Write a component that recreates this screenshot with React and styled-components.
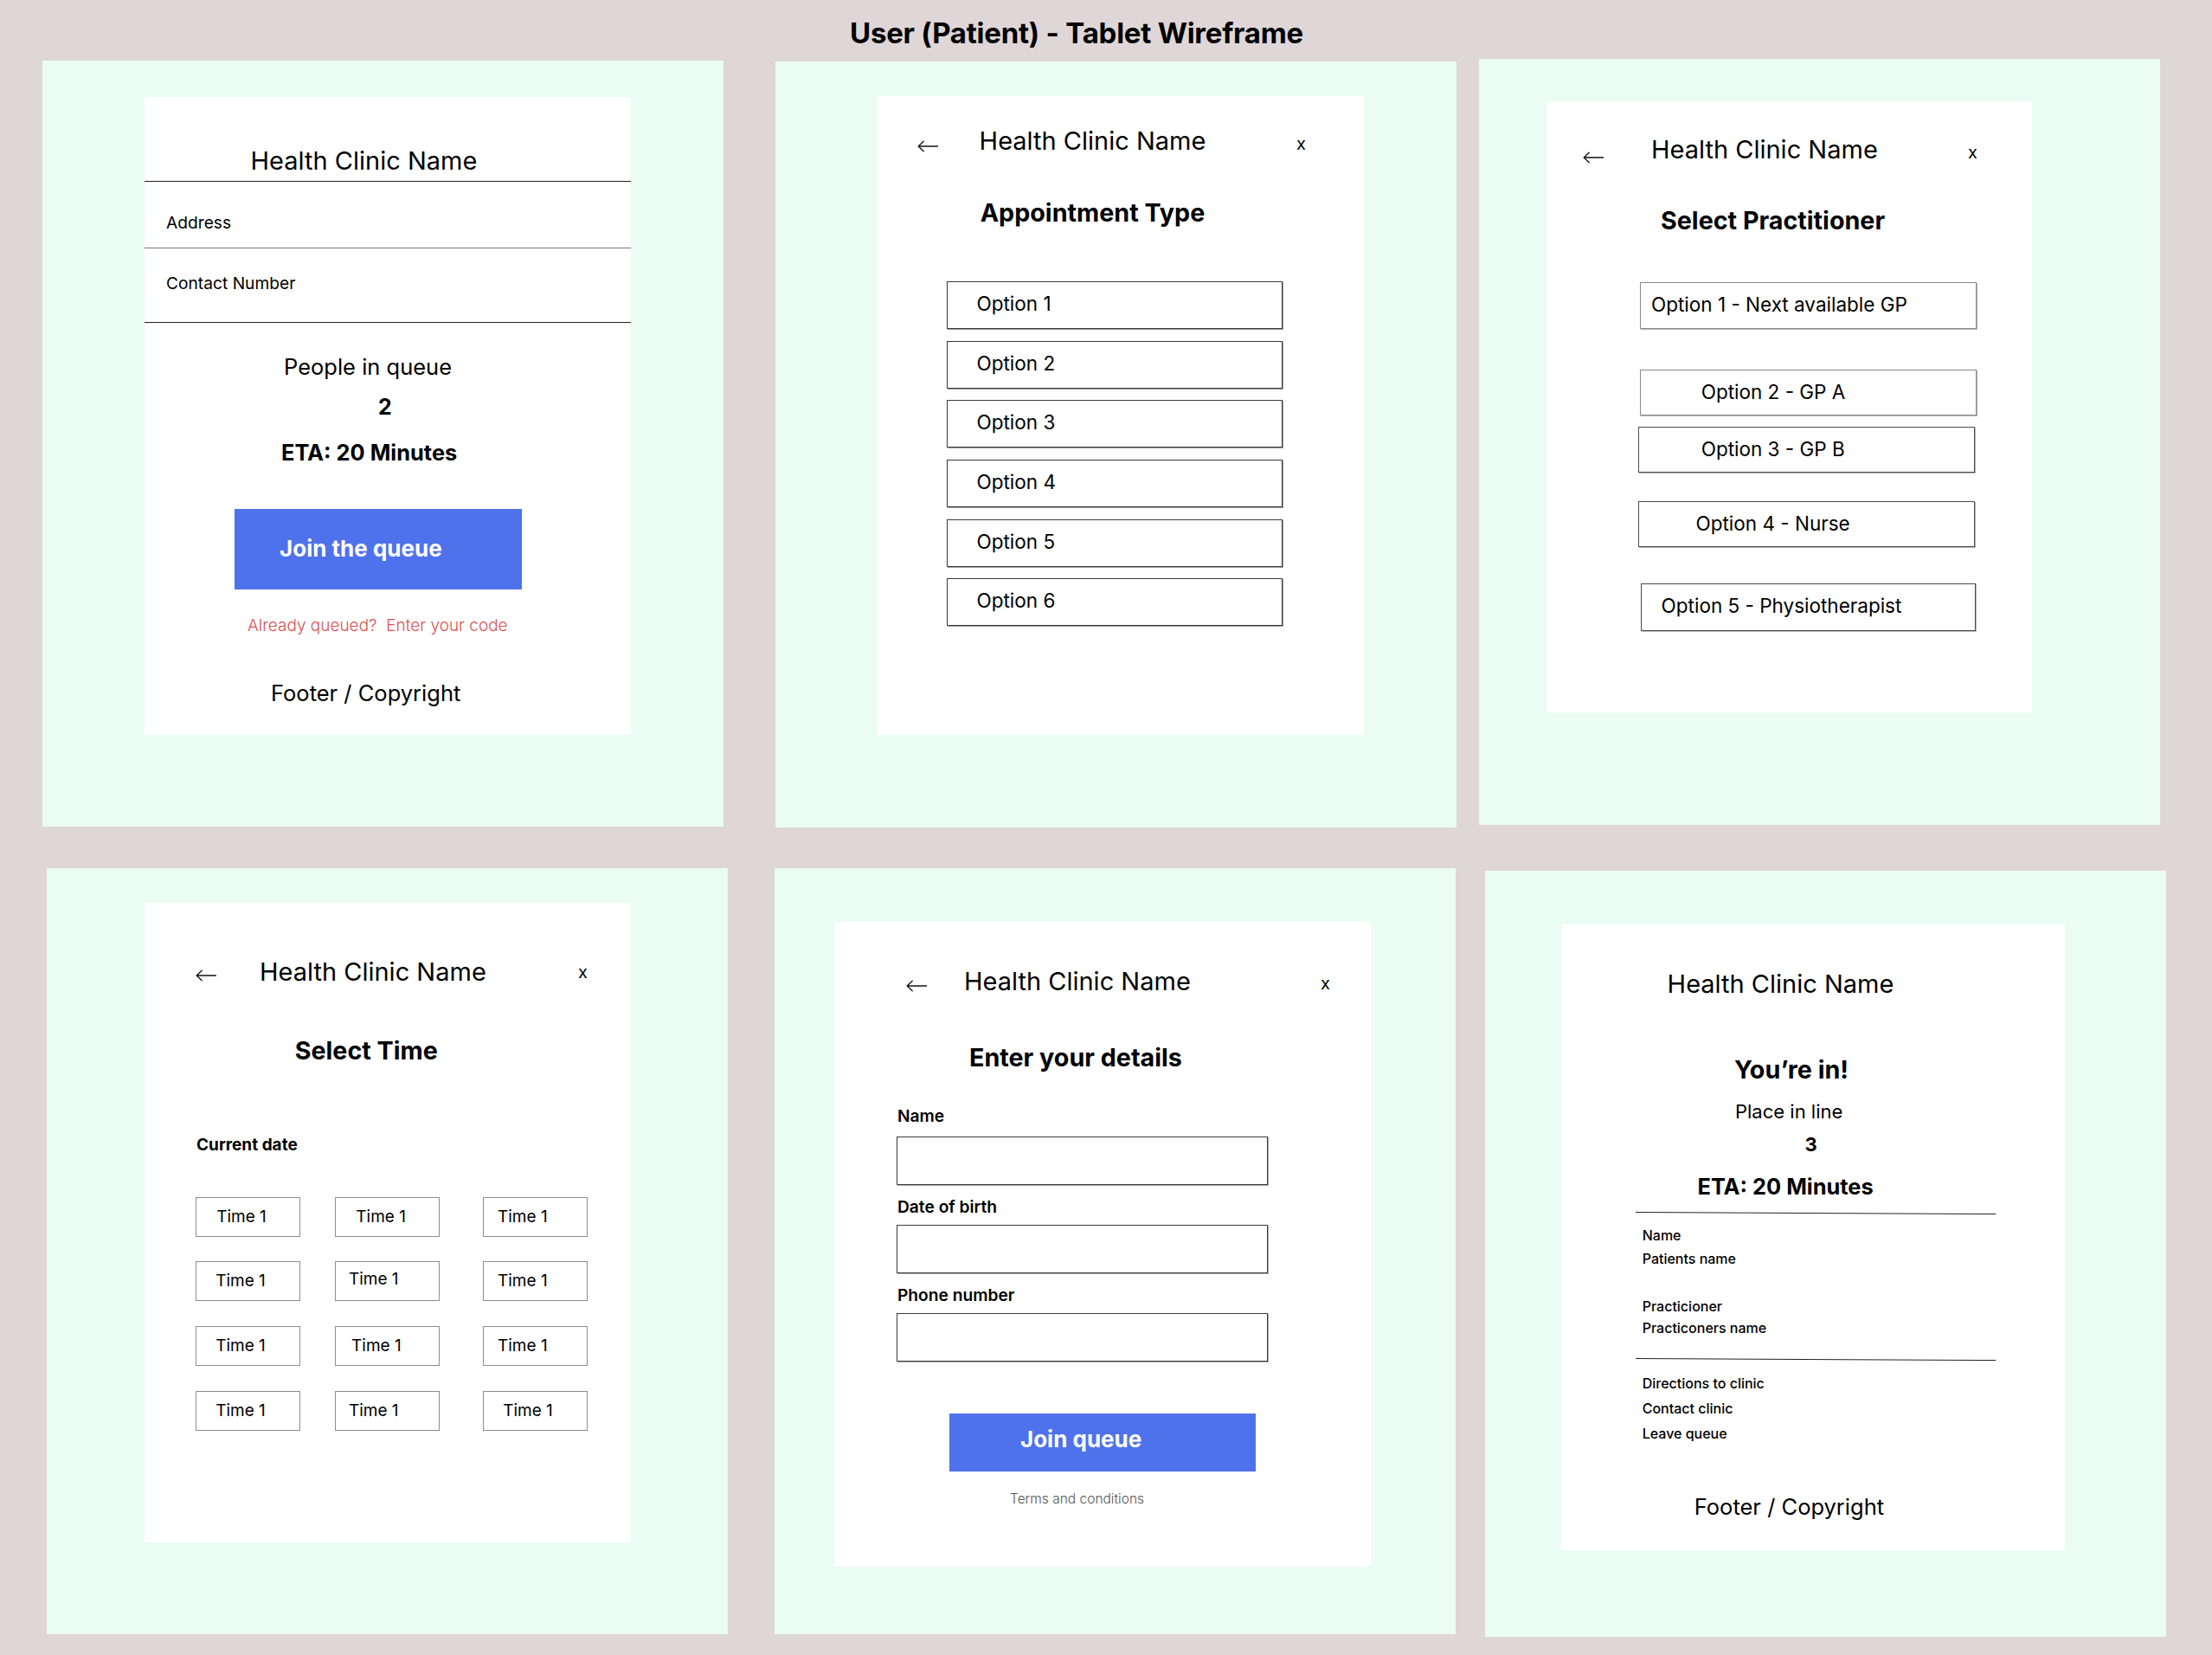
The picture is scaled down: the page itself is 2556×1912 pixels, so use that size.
import React from 'react';
import styled, { createGlobalStyle, css } from 'styled-components';

const GlobalStyle = createGlobalStyle`
  *, *::before, *::after { box-sizing: border-box; }
  html, body { margin: 0; padding: 0; background: #dfd6d7; }
  body {
    font-family: Inter, "Noto Sans", "Liberation Sans", Arial, sans-serif;
    color: #000;
    -webkit-font-smoothing: antialiased;
  }
`;

const place = css`
  margin-top: ${p => p.$mt || 0}px;
  margin-left: ${p => p.$ml || 0}px;
`;

const Page = styled.div`
  width: 2556px;
  height: 1912px;
  background: #dfd6d7;
  overflow: hidden;
`;

const Header = styled.header`
  height: 68px;
  padding: 18px 68px 0 0;
  text-align: center;
`;

const PageTitle = styled.h1`
  margin: 0;
  font-size: 33px;
  line-height: 40px;
  font-weight: 700;
  letter-spacing: -0.25px;
`;

const Board = styled.main`
  display: flex;
  flex-direction: column;
  gap: 47px;
`;

const FrameRow = styled.div`
  display: flex;
  align-items: flex-start;
  height: 888px;
`;

const Frame = styled.section`
  flex: none;
  width: 787px;
  height: 885px;
  background: #eafcf4;
  margin-left: ${p => p.$ml}px;
  margin-top: ${p => p.$mt}px;
  padding-top: ${p => p.$pt}px;
  padding-left: ${p => p.$pl}px;
`;

const Card = styled.div`
  width: ${p => p.$w}px;
  height: ${p => p.$h}px;
  background: #ffffff;
  display: flex;
  flex-direction: column;
  align-items: flex-start;
`;

/* ---------- shared header parts ---------- */

const NavRow = styled.div`
  align-self: stretch;
  display: flex;
  align-items: flex-start;
  margin-top: ${p => p.$mt}px;
  padding-left: ${p => p.$pl}px;
  padding-right: ${p => p.$pr}px;
`;

const ArrowIcon = styled.svg`
  flex: none;
  display: block;
  margin-top: ${p => p.$mt}px;
`;

const ClinicName = styled.div`
  ${place}
  font-size: 29px;
  line-height: 1.25;
  font-weight: 400;
  white-space: nowrap;
`;

const CloseMark = styled.span`
  margin-left: auto;
  margin-top: ${p => p.$mt}px;
  font-size: 20px;
  line-height: 1.25;
  font-weight: 400;
`;

const Heading = styled.h2`
  ${place}
  margin-bottom: 0;
  margin-right: 0;
  font-size: 28.7px;
  line-height: 1.25;
  font-weight: 700;
  white-space: nowrap;
`;

const BackArrow = ({ mt }) => (
  <ArrowIcon $mt={mt} width="24" height="14" viewBox="0 0 24 14" fill="none">
    <path d="M23.5 7H1.2M7.2 1.2L1.2 7l6 5.8" stroke="#111" strokeWidth="1.3" strokeLinecap="round" strokeLinejoin="round" />
  </ArrowIcon>
);

const TopBar = ({ mt, pl, gap, pr, arrowMt, closeMt }) => (
  <NavRow $mt={mt} $pl={pl} $pr={pr}>
    <BackArrow mt={arrowMt} />
    <ClinicName $ml={gap}>Health Clinic Name</ClinicName>
    <CloseMark $mt={closeMt}>x</CloseMark>
  </NavRow>
);

/* ---------- screen 1 ---------- */

const Rule = styled.div`
  ${place}
  align-self: ${p => (p.$w ? 'flex-start' : 'stretch')};
  width: ${p => (p.$w ? `${p.$w}px` : 'auto')};
  height: 1px;
  flex: none;
  background: ${p => p.$tone || '#222'};
  transform: rotate(${p => p.$tilt || 0}deg);
`;

const InfoText = styled.div`
  ${place}
  font-size: 19.2px;
  line-height: 1.25;
  white-space: nowrap;
`;

const QueueText = styled.div`
  ${place}
  font-size: ${p => p.$size || 25.5}px;
  line-height: 1.25;
  font-weight: ${p => (p.$bold ? 700 : 400)};
  white-space: nowrap;
`;

const PrimaryButton = styled.button`
  ${place}
  flex: none;
  width: ${p => p.$w}px;
  height: ${p => p.$h}px;
  border: none;
  border-radius: 0;
  background: #4e72eb;
  color: #fff;
  font-family: inherit;
  font-size: 26px;
  font-weight: 700;
  line-height: 1.25;
  display: flex;
  align-items: center;
  padding: 0 0 ${p => p.$lift || 0}px ${p => p.$pl}px;
  text-align: left;
  white-space: nowrap;
  cursor: pointer;
`;

const CodeLink = styled.a`
  ${place}
  font-size: 19px;
  line-height: 1.25;
  font-weight: 300;
  color: #de5151;
  text-decoration: none;
  white-space: pre;
`;

const FooterText = styled.footer`
  ${place}
  font-size: 25.5px;
  line-height: 1.25;
  white-space: nowrap;
`;

const QueueScreen = () => (
  <Card $w={562} $h={737}>
    <ClinicName $mt={55.6} $ml={122.5}>Health Clinic Name</ClinicName>
    <Rule $mt={5.45} />
    <InfoText $mt={35} $ml={25}>Address</InfoText>
    <Rule $mt={16.75} $tone="#777" />
    <InfoText $mt={28.3} $ml={25}>Contact Number</InfoText>
    <Rule $mt={33.05} />
    <QueueText $mt={34.8} $ml={161}>People in queue</QueueText>
    <QueueText $mt={14.55} $ml={270} $size={25} $bold>2</QueueText>
    <QueueText $mt={21.4} $ml={158} $size={25.4} $bold>ETA: 20 Minutes</QueueText>
    <PrimaryButton $mt={49.4} $ml={104} $w={332} $h={92.6} $pl={52}>Join the queue</PrimaryButton>
    <CodeLink $mt={29.6} $ml={119}>Already queued?  Enter your code</CodeLink>
    <FooterText $mt={50.85} $ml={146}>Footer / Copyright</FooterText>
  </Card>
);

/* ---------- screens 2 & 3 ---------- */

const ChoiceList = styled.div`
  ${place}
  display: flex;
  flex-direction: column;
  gap: 13.7px;
`;

const ChoiceBox = styled.div`
  ${place}
  flex: none;
  width: ${p => p.$w}px;
  height: ${p => p.$h}px;
  border: 1px solid ${p => p.$tone || '#3a3a3a'};
  box-shadow: 1px 1px 0 ${p => p.$shade || '#9a9a9a'};
  padding: 11px 0 0 ${p => p.$pl}px;
  font-size: 22.5px;
  line-height: 1.25;
  white-space: nowrap;
`;

const appointmentOptions = ['Option 1', 'Option 2', 'Option 3', 'Option 4', 'Option 5', 'Option 6'];

const AppointmentScreen = () => (
  <Card $w={563} $h={738}>
    <TopBar mt={34} pl={47} gap={47.6} pr={67} arrowMt={17} closeMt={8.8} />
    <Heading $mt={46.3} $ml={119.7}>Appointment Type</Heading>
    <ChoiceList $mt={61.5} $ml={81}>
      {appointmentOptions.map(o => (
        <ChoiceBox key={o} $w={388} $h={55} $pl={33.5}>{o}</ChoiceBox>
      ))}
    </ChoiceList>
  </Card>
);

const practitioners = [
  { label: 'Option 1 - Next available GP', mt: 52.8, ml: 108, w: 389, h: 54, pl: 12, tone: '#8a8a8a' },
  { label: 'Option 2 - GP A', mt: 47.2, ml: 108, w: 389, h: 53, pl: 69.7, tone: '#8a8a8a' },
  { label: 'Option 3 - GP B', mt: 13, ml: 105.5, w: 389, h: 52.6, pl: 72.2, tone: '#4a4a4a' },
  { label: 'Option 4 - Nurse', mt: 33.8, ml: 105.5, w: 389, h: 52.6, pl: 66, tone: '#4a4a4a' },
  { label: 'Option 5 - Physiotherapist', mt: 41.7, ml: 108.6, w: 387.4, h: 55, pl: 23, tone: '#4a4a4a' },
];

const PractitionerScreen = () => (
  <Card $w={561} $h={706}>
    <TopBar mt={37.3} pl={41.7} gap={55.3} pr={63} arrowMt={20.3} closeMt={8.9} />
    <Heading $mt={46.15} $ml={132}>Select Practitioner</Heading>
    {practitioners.map(p => (
      <ChoiceBox
        key={p.label}
        $mt={p.mt}
        $ml={p.ml}
        $w={p.w}
        $h={p.h}
        $pl={p.pl}
        $tone={p.tone}
        $shade="#b5b5b5"
      >
        {p.label}
      </ChoiceBox>
    ))}
  </Card>
);

/* ---------- screen 4 ---------- */

const DateLabel = styled.div`
  ${place}
  font-size: 19px;
  line-height: 1.25;
  font-weight: 700;
  white-space: nowrap;
`;

const TimeGrid = styled.div`
  ${place}
  display: grid;
  grid-template-columns: 161px 171px 121px;
  row-gap: 28.8px;
`;

const TimeSlot = styled.div`
  width: 121px;
  height: 46px;
  border: 1px solid #8d8d8d;
  display: flex;
  align-items: center;
  padding-left: ${p => p.$pl}px;
  padding-bottom: ${p => p.$lift || 0}px;
  font-size: 19px;
  line-height: 1.25;
  white-space: nowrap;
`;

const slotInsets = [
  [23.5, 23.6, 16.3],
  [22.5, 15.2, 16.3],
  [22.5, 18.4, 16.3],
  [22.5, 15.2, 22.5],
];

const TimeScreen = () => (
  <Card $w={562} $h={739}>
    <TopBar mt={61.3} pl={58.7} gap={50.3} pr={50} arrowMt={14.9} closeMt={5.9} />
    <Heading $mt={54.65} $ml={173.7}>Select Time</Heading>
    <DateLabel $mt={79.7} $ml={60}>Current date</DateLabel>
    <TimeGrid $mt={47.65} $ml={58.7}>
      {slotInsets.flatMap((row, r) =>
        row.map((pl, c) => (
          <TimeSlot key={`${r}-${c}`} $pl={pl} $lift={r === 1 && c === 1 ? 4 : 0}>Time 1</TimeSlot>
        ))
      )}
    </TimeGrid>
  </Card>
);

/* ---------- screen 5 ---------- */

const FieldLabel = styled.label`
  ${place}
  display: block;
  font-size: 19.2px;
  line-height: 1.25;
  font-weight: 600;
  white-space: nowrap;
`;

const TextField = styled.div`
  ${place}
  flex: none;
  width: 429px;
  height: 56px;
  border: 1px solid #3c3c3c;
  box-shadow: 1px 1px 0 #a8a8a8;
  background: #fff;
`;

const FinePrint = styled.div`
  ${place}
  font-size: 15.5px;
  line-height: 1.25;
  font-weight: 300;
  color: #555;
  white-space: nowrap;
`;

const DetailsScreen = () => (
  <Card $w={620} $h={745}>
    <TopBar mt={51.7} pl={83.3} gap={43} pr={46.7} arrowMt={15.7} closeMt={7.5} />
    <Heading $mt={51.85} $ml={156.3}>Enter your details</Heading>
    <FieldLabel $mt={36.5} $ml={73.3}>Name</FieldLabel>
    <TextField $mt={12.4} $ml={72.7} />
    <FieldLabel $mt={13} $ml={73.3}>Date of birth</FieldLabel>
    <TextField $mt={8.8} $ml={72.7} />
    <FieldLabel $mt={13} $ml={73.3}>Phone number</FieldLabel>
    <TextField $mt={9.4} $ml={72.7} />
    <PrimaryButton $mt={60} $ml={132.9} $w={354} $h={66.6} $pl={82.4} $lift={7}>Join queue</PrimaryButton>
    <FinePrint $mt={22} $ml={203.3}>Terms and conditions</FinePrint>
  </Card>
);

/* ---------- screen 6 ---------- */

const DetailText = styled.div`
  ${place}
  font-size: 16px;
  line-height: 1.25;
  font-weight: 500;
  white-space: nowrap;
`;

const ConfirmScreen = () => (
  <Card $w={582} $h={723}>
    <ClinicName $mt={51.7} $ml={123}>Health Clinic Name</ClinicName>
    <Heading $mt={62.15} $ml={200.4}>You’re in!</Heading>
    <QueueText $mt={17.2} $ml={201.4} $size={22}>Place in line</QueueText>
    <QueueText $mt={11} $ml={281.9} $size={22} $bold>3</QueueText>
    <QueueText $mt={18.2} $ml={157.9} $size={25.4} $bold>ETA: 20 Minutes</QueueText>
    <Rule $mt={14.4} $ml={86.2} $w={416} $tilt={0.28} />
    <DetailText $mt={15.2} $ml={94.1}>Name</DetailText>
    <DetailText $mt={6.6} $ml={94.1}>Patients name</DetailText>
    <DetailText $mt={35.4} $ml={94.1}>Practicioner</DetailText>
    <DetailText $mt={5} $ml={94.1}>Practiconers name</DetailText>
    <Rule $mt={25.8} $ml={86.2} $w={416} $tilt={0.28} />
    <DetailText $mt={17.2} $ml={94.1}>Directions to clinic</DetailText>
    <DetailText $mt={9} $ml={94.1}>Contact clinic</DetailText>
    <DetailText $mt={8.6} $ml={94.1}>Leave queue</DetailText>
    <FooterText $mt={59.6} $ml={154.2}>Footer / Copyright</FooterText>
  </Card>
);

export default function App() {
  return (
    <>
      <GlobalStyle />
      <Page>
        <Header>
          <PageTitle>User (Patient) - Tablet Wireframe</PageTitle>
        </Header>
        <Board>
          <FrameRow>
            <Frame $ml={49} $mt={2} $pt={42} $pl={118}>
              <QueueScreen />
            </Frame>
            <Frame $ml={60} $mt={3} $pt={40} $pl={117}>
              <AppointmentScreen />
            </Frame>
            <Frame $ml={25.5} $mt={0} $pt={49.4} $pl={78.5}>
              <PractitionerScreen />
            </Frame>
          </FrameRow>
          <FrameRow>
            <Frame $ml={54} $mt={0} $pt={40.4} $pl={113}>
              <TimeScreen />
            </Frame>
            <Frame $ml={54} $mt={0} $pt={61.6} $pl={68.7}>
              <DetailsScreen />
            </Frame>
            <Frame $ml={34} $mt={2.5} $pt={62} $pl={87.6}>
              <ConfirmScreen />
            </Frame>
          </FrameRow>
        </Board>
      </Page>
    </>
  );
}
